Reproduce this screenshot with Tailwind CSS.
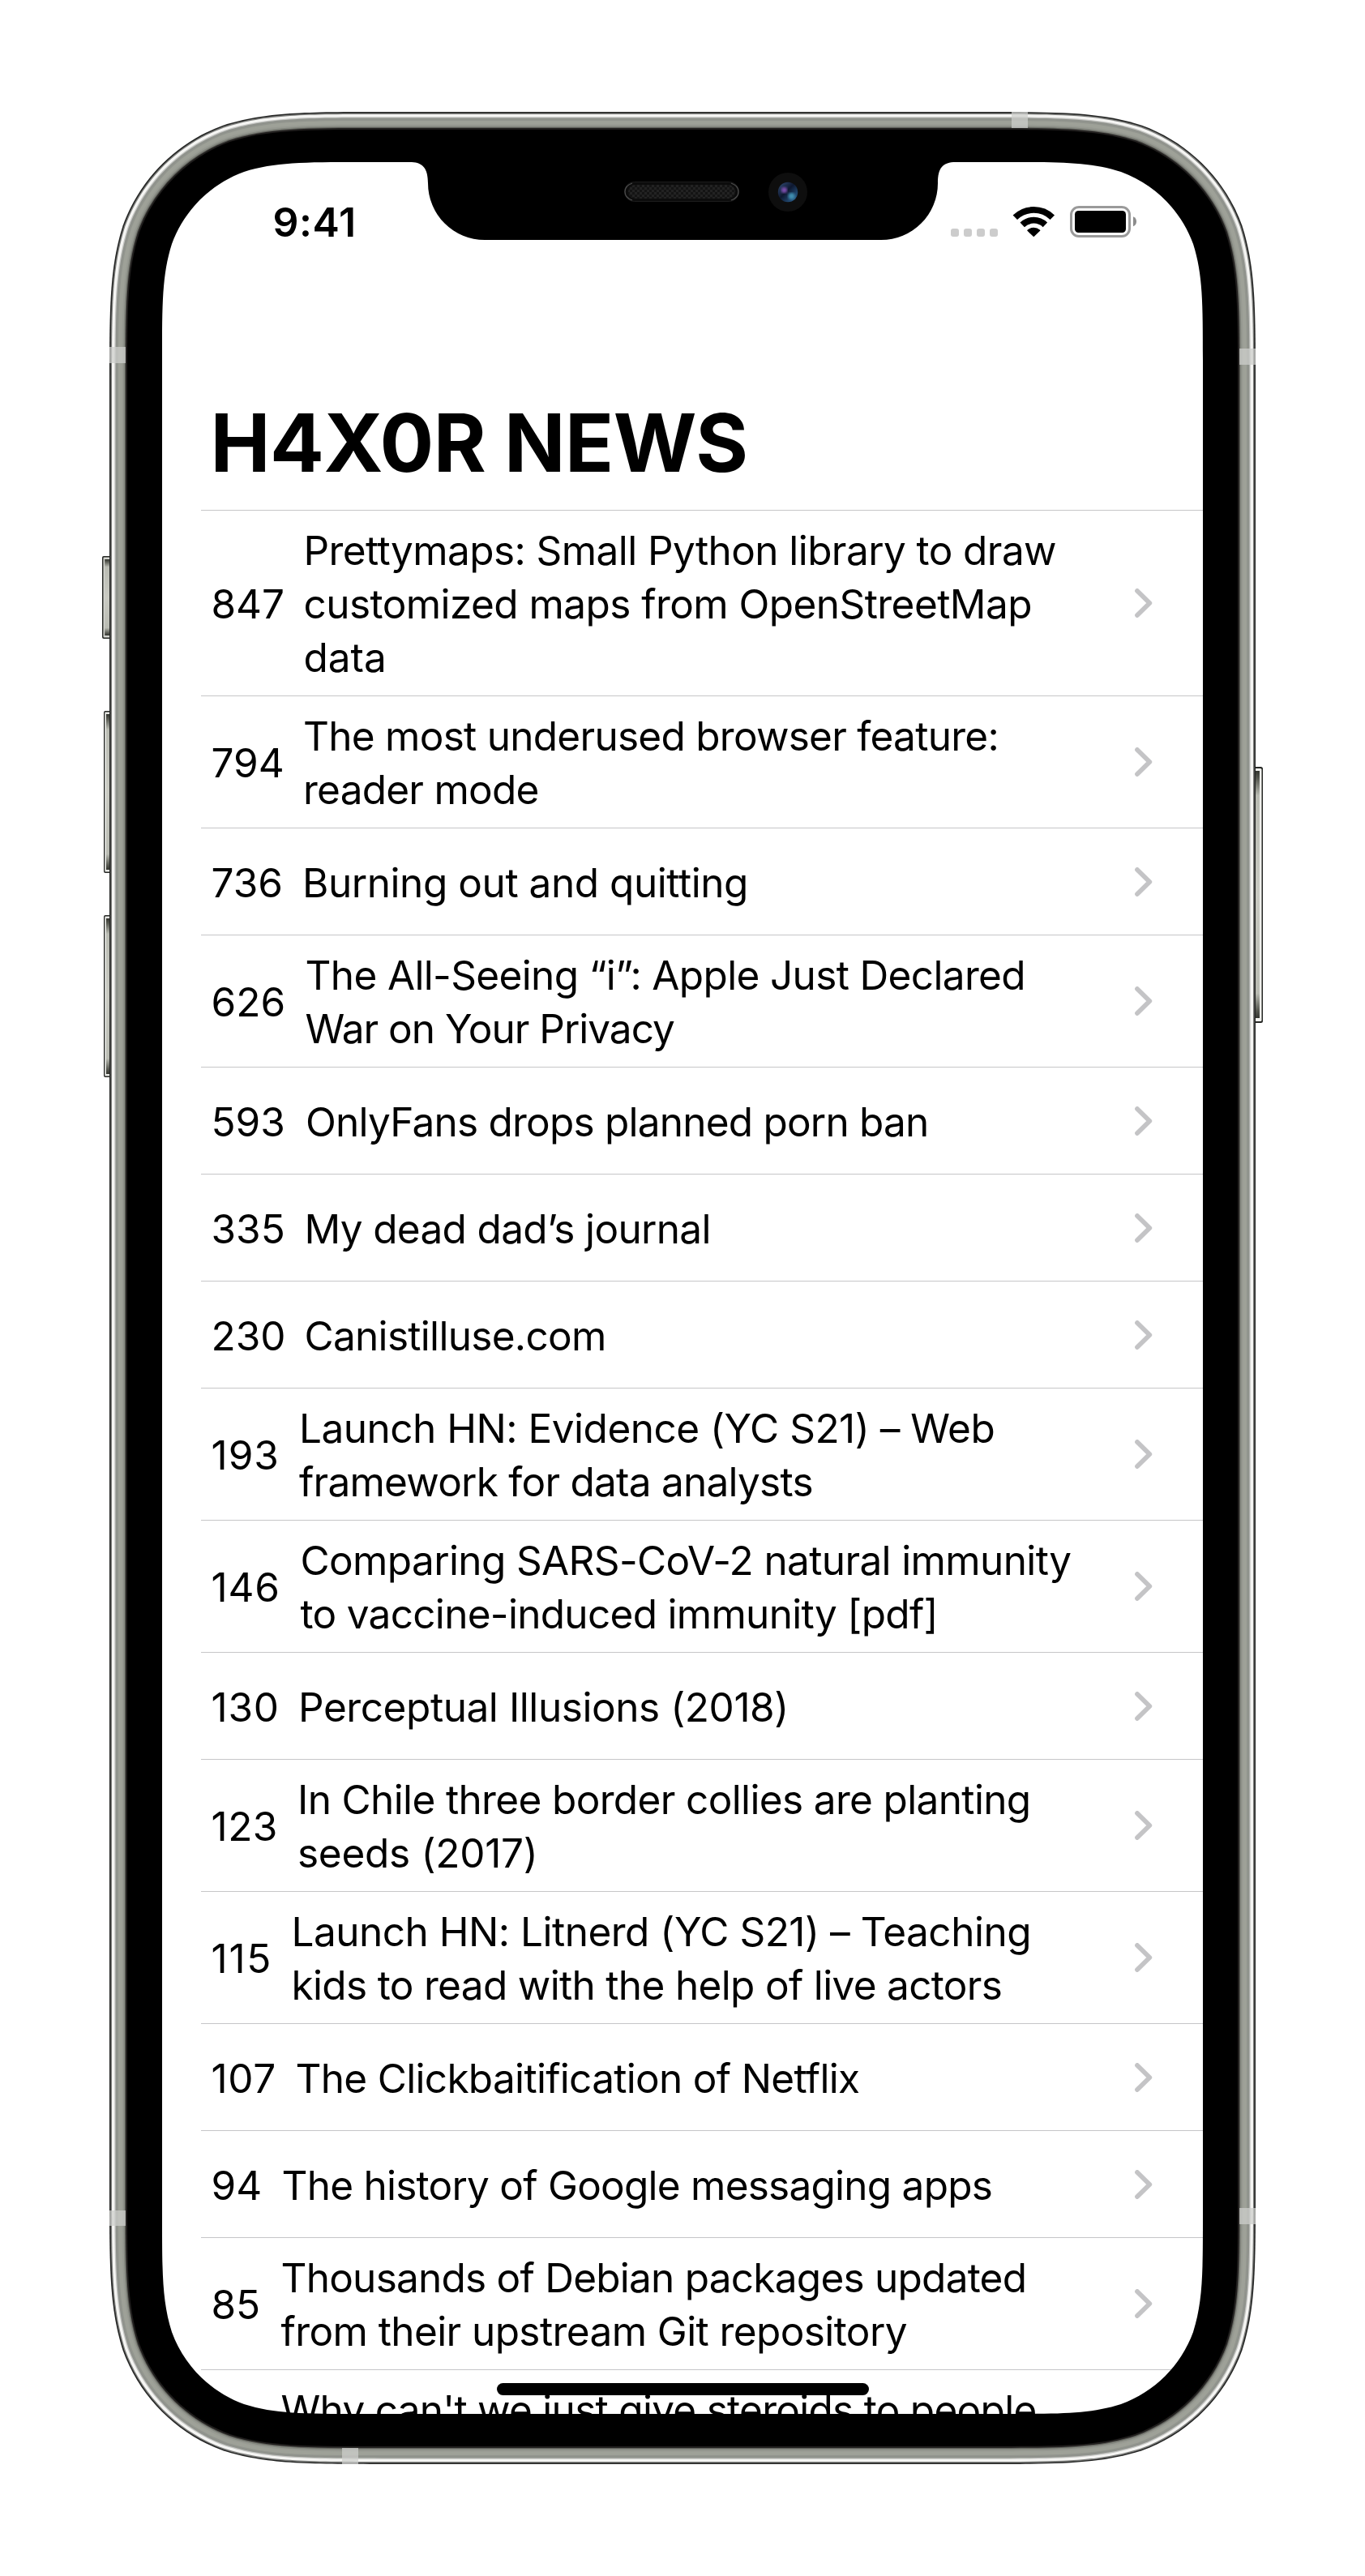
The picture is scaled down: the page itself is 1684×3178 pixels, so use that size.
<!DOCTYPE html>
<html lang="en">
<head>
<meta charset="utf-8">
<title>H4X0R NEWS</title>
<script src="https://cdn.jsdelivr.net/npm/@tailwindcss/browser@4"></script>
</head>
<body class="bg-white">
<svg class="hidden">
  <symbol id="chevron" viewBox="0 0 22 36"><path d="M3 3 18.3 18 3 33" fill="none" stroke="#c4c4c6" stroke-width="5.8" stroke-linecap="round" stroke-linejoin="round"/></symbol>
</svg>
<main class="relative w-[1684px] h-[3178px] p-[200px] overflow-hidden font-['Inter',sans-serif] text-black">

  <!-- metal frame and side buttons -->
  <svg class="absolute inset-0" width="1684" height="3178" viewBox="0 0 1684 3178">
    <defs>
      <linearGradient id="btn" x1="0" y1="0" x2="0" y2="1">
        <stop offset="0" stop-color="#33352f"/><stop offset=".03" stop-color="#55574f"/><stop offset=".1" stop-color="#b9bbb2"/>
        <stop offset=".5" stop-color="#c9cac2"/><stop offset=".9" stop-color="#b9bbb2"/><stop offset=".97" stop-color="#55574f"/><stop offset="1" stop-color="#33352f"/>
      </linearGradient>
      <pattern id="mesh" width="6" height="6" patternUnits="userSpaceOnUse">
        <rect width="6" height="6" fill="#141414"/><rect width="3" height="3" fill="#222"/><rect x="3" y="3" width="3" height="3" fill="#222"/>
      </pattern>
      <linearGradient id="lens" x1="0" y1="0" x2="1" y2="1">
        <stop offset="0" stop-color="#35507a"/><stop offset=".45" stop-color="#0e1830"/><stop offset="1" stop-color="#2f6ca0"/>
      </linearGradient>
      <filter id="soft"><feGaussianBlur stdDeviation="1.6"/></filter>
    </defs>
    <g>
      <rect x="126" y="686" width="14" height="102" rx="2" fill="#262825"/><rect x="127.5" y="687.5" width="12" height="99" rx="1" fill="#d4d5d0"/><rect x="129.2" y="690" width="8" height="94" fill="url(#btn)"/>
      <rect x="128" y="877" width="12" height="200" rx="2" fill="#262825"/><rect x="129.3" y="878.5" width="10" height="197" rx="1" fill="#e6e7e3"/><rect x="131" y="881" width="8" height="192" fill="url(#btn)"/>
      <rect x="128" y="1129" width="12" height="200" rx="2" fill="#262825"/><rect x="129.3" y="1130.5" width="10" height="197" rx="1" fill="#e6e7e3"/><rect x="131" y="1133" width="8" height="192" fill="url(#btn)"/>
      <rect x="1544" y="946" width="14" height="316" rx="2.5" fill="#262825"/><rect x="1545" y="948" width="11.5" height="312" rx="1.5" fill="#f1f1ee"/><rect x="1547" y="951" width="7" height="305" fill="url(#btn)"/>
    </g>
    <g id="rings"></g>
    <g fill="#cdcfcc" fill-opacity=".74">
      <rect x="135" y="428" width="20" height="20"/><rect x="1529" y="430" width="20" height="20"/>
      <rect x="1248" y="138" width="20" height="20"/><rect x="135" y="2727" width="20" height="19"/>
      <rect x="1529" y="2724" width="20" height="20"/><rect x="422" y="3020" width="20" height="20"/>
    </g>
  </svg>

  <!-- screen -->
  <div class="relative w-[1284px] h-[2778px] overflow-hidden rounded-[125px] bg-white">
    <div class="flex h-[147px] items-center justify-between pl-[136.5px] pr-[81px]">
      <span class="text-[50px] leading-[60px] font-semibold tracking-[0.6px]">9:41</span>
      <svg width="230" height="39" viewBox="0 0 230 39">
        <g fill="#ccc"><rect y="28" width="10" height="10" rx="3"/><rect x="16" y="28" width="10" height="10" rx="3"/><rect x="32" y="28" width="10" height="10" rx="3"/><rect x="48" y="28" width="10" height="10" rx="3"/></g>
        <g fill="none" stroke="#000" stroke-width="7.8">
          <path d="M79.3 14.2A33.1 33.1 0 0 1 125.3 14.2"/>
          <path d="M88.2 23.4A20.3 20.3 0 0 1 116.4 23.4"/>
        </g>
        <path d="M95 30.3A11 11 0 0 1 109.6 30.3L102.3 37.3Z" stroke="#000" stroke-width="1.5" stroke-linejoin="round"/>
        <rect x="148.5" y="1.5" width="72" height="36" rx="9.5" fill="none" stroke="#9a9a9a" stroke-width="3"/>
        <rect x="153" y="6" width="63" height="27" rx="4.5"/>
        <path d="M225 13.3Q229 15 229 19.3Q229 23.6 225 25.3Z" fill="#8c8c8c"/>
      </svg>
    </div>
    <header class="flex h-[282px] items-end pb-[22px] pl-[59.5px]">
      <h1 class="text-[99px] leading-[122px] font-bold tracking-[-0.5px] whitespace-pre">H4X0R NEWS</h1>
    </header>
    <ul class="ml-12 text-[49.5px] leading-[66px] whitespace-nowrap">
      <li class="flex h-[229px] items-center border-t border-[#c6c6c8] pl-[12.5px] pr-[62px]">
        <span class="w-[114px] pt-[2px]">847</span>
        <p class="flex-1 pt-[2px]"><span class="block tracking-[-0.58px]">Prettymaps: Small Python library to draw</span><span class="block tracking-[-0.56px]">customized maps from OpenStreetMap</span><span class="block">data</span></p>
        <svg class="h-[36px] w-[22px]"><use href="#chevron"/></svg>
      </li>
      <li class="flex h-[163px] items-center border-t border-[#c6c6c8] pl-[12.5px] pr-[62px]">
        <span class="w-[113.5px] pt-[2px]">794</span>
        <p class="flex-1 pt-[2px]"><span class="block tracking-[-0.73px]">The most underused browser feature:</span><span class="block tracking-[-0.75px]">reader mode</span></p>
        <svg class="h-[36px] w-[22px]"><use href="#chevron"/></svg>
      </li>
      <li class="flex h-[132px] items-center border-t border-[#c6c6c8] pl-[12.5px] pr-[62px]">
        <span class="w-[112.5px] pt-[2px]">736</span>
        <p class="flex-1 pt-[2px] tracking-[-0.44px]">Burning out and quitting</p>
        <svg class="h-[36px] w-[22px]"><use href="#chevron"/></svg>
      </li>
      <li class="flex h-[163px] items-center border-t border-[#c6c6c8] pl-[12.5px] pr-[62px]">
        <span class="w-[116px] pt-[2px]">626</span>
        <p class="flex-1 pt-[2px]"><span class="block tracking-[-0.65px]">The All-Seeing “i”: Apple Just Declared</span><span class="block tracking-[-1px]">War on Your Privacy</span></p>
        <svg class="h-[36px] w-[22px]"><use href="#chevron"/></svg>
      </li>
      <li class="flex h-[132px] items-center border-t border-[#c6c6c8] pl-[12.5px] pr-[62px]">
        <span class="w-[116.5px] pt-[2px]">593</span>
        <p class="flex-1 pt-[2px] tracking-[-0.78px]">OnlyFans drops planned porn ban</p>
        <svg class="h-[36px] w-[22px]"><use href="#chevron"/></svg>
      </li>
      <li class="flex h-[132px] items-center border-t border-[#c6c6c8] pl-[12.5px] pr-[62px]">
        <span class="w-[115px] pt-[2px]">335</span>
        <p class="flex-1 pt-[2px] tracking-[-0.67px]">My dead dad’s journal</p>
        <svg class="h-[36px] w-[22px]"><use href="#chevron"/></svg>
      </li>
      <li class="flex h-[132px] items-center border-t border-[#c6c6c8] pl-[12.5px] pr-[62px]">
        <span class="w-[115px] pt-[2px]">230</span>
        <p class="flex-1 pt-[2px] tracking-[-0.7px]">Canistilluse.com</p>
        <svg class="h-[36px] w-[22px]"><use href="#chevron"/></svg>
      </li>
      <li class="flex h-[163px] items-center border-t border-[#c6c6c8] pl-[12.5px] pr-[62px]">
        <span class="w-[108.5px] pt-[2px] tracking-[1px]">193</span>
        <p class="flex-1 pt-[2px]"><span class="block tracking-[-0.5px]">Launch HN: Evidence (YC S21) – Web</span><span class="block tracking-[-0.75px]">framework for data analysts</span></p>
        <svg class="h-[36px] w-[22px]"><use href="#chevron"/></svg>
      </li>
      <li class="flex h-[163px] items-center border-t border-[#c6c6c8] pl-[12.5px] pr-[62px]">
        <span class="w-[110px] pt-[2px] tracking-[0.8px]">146</span>
        <p class="flex-1 pt-[2px]"><span class="block tracking-[-0.63px]">Comparing SARS-CoV-2 natural immunity</span><span class="block tracking-[-0.7px]">to vaccine-induced immunity [pdf]</span></p>
        <svg class="h-[36px] w-[22px]"><use href="#chevron"/></svg>
      </li>
      <li class="flex h-[132px] items-center border-t border-[#c6c6c8] pl-[12.5px] pr-[62px]">
        <span class="w-[107.5px] pt-[2px] tracking-[0.8px]">130</span>
        <p class="flex-1 pt-[2px] tracking-[-0.43px]">Perceptual Illusions (2018)</p>
        <svg class="h-[36px] w-[22px]"><use href="#chevron"/></svg>
      </li>
      <li class="flex h-[163px] items-center border-t border-[#c6c6c8] pl-[12.5px] pr-[62px]">
        <span class="w-[106.5px] pt-[2px] tracking-[0.5px]">123</span>
        <p class="flex-1 pt-[2px]"><span class="block tracking-[-0.64px]">In Chile three border collies are planting</span><span class="block tracking-[-0.28px]">seeds (2017)</span></p>
        <svg class="h-[36px] w-[22px]"><use href="#chevron"/></svg>
      </li>
      <li class="flex h-[163px] items-center border-t border-[#c6c6c8] pl-[12.5px] pr-[62px]">
        <span class="w-[99px] pt-[2px] tracking-[1.8px]">115</span>
        <p class="flex-1 pt-[2px]"><span class="block tracking-[-0.5px]">Launch HN: Litnerd (YC S21) – Teaching</span><span class="block tracking-[-0.67px]">kids to read with the help of live actors</span></p>
        <svg class="h-[36px] w-[22px]"><use href="#chevron"/></svg>
      </li>
      <li class="flex h-[132px] items-center border-t border-[#c6c6c8] pl-[12.5px] pr-[62px]">
        <span class="w-[104px] pt-[2px] tracking-[0.7px]">107</span>
        <p class="flex-1 pt-[2px] tracking-[-0.69px]">The Clickbaitification of Netflix</p>
        <svg class="h-[36px] w-[22px]"><use href="#chevron"/></svg>
      </li>
      <li class="flex h-[132px] items-center border-t border-[#c6c6c8] pl-[12.5px] pr-[62px]">
        <span class="w-[87px] pt-[2px]">94</span>
        <p class="flex-1 pt-[2px] tracking-[-0.76px]">The history of Google messaging apps</p>
        <svg class="h-[36px] w-[22px]"><use href="#chevron"/></svg>
      </li>
      <li class="flex h-[163px] items-center border-t border-[#c6c6c8] pl-[12.5px] pr-[62px]">
        <span class="w-[86px] pt-[2px]">85</span>
        <p class="flex-1 pt-[2px]"><span class="block tracking-[-0.76px]">Thousands of Debian packages updated</span><span class="block tracking-[-0.59px]">from their upstream Git repository</span></p>
        <svg class="h-[36px] w-[22px]"><use href="#chevron"/></svg>
      </li>
      <li class="flex h-[163px] items-start border-t border-[#c6c6c8] pl-[98.5px] pt-[16px]">
        <p class="tracking-[-0.72px]">Why can't we just give steroids to people</p>
      </li>
    </ul>
    <!-- home indicator -->
    <div class="absolute left-[413px] bottom-[23px] h-[15px] w-[459px] rounded-full bg-black"></div>
  </div>

  <!-- bezel, notch, speaker and camera -->
  <svg class="pointer-events-none absolute inset-0" width="1684" height="3178" viewBox="0 0 1684 3178">
    <path id="bezel" fill="#000" fill-rule="evenodd"/>
    <path d="M506 199V200C521 200 528 207 528 226A70 70 0 0 0 598 296H1087A70 70 0 0 0 1157 226C1157 207 1163 200 1179 200V199Z"/>
    <rect x="770.5" y="224.5" width="141" height="24" rx="12" fill="#0c0c0c" stroke="#1c1c1c"/>
    <path d="M780 226Q771 229 771 236.5T780 247M902 226Q911 229 911 236.5T902 247" fill="none" stroke="#4c4c4c" stroke-width="1.3"/>
    <rect x="775" y="228" width="132" height="17" rx="8.5" fill="url(#mesh)"/>
    <circle cx="972" cy="237" r="24" fill="#0e0e0e"/>
    <circle cx="972" cy="237" r="12.2" fill="url(#lens)"/>
    <circle cx="967.5" cy="234.5" r="3.6" fill="#7d4fae" filter="url(#soft)"/>
    <circle cx="976.5" cy="242" r="4" fill="#3f8fb0" filter="url(#soft)"/>
  </svg>
</main>
<script>
  // Rounded rectangle with continuous-curvature corners.
  function squircle(x, y, w, h, r) {
    const corners = [
      [x + w, y, -1, 0, 0, 1], [x + w, y + h, 0, -1, -1, 0],
      [x, y + h, 1, 0, 0, -1], [x, y, 0, 1, 1, 0]
    ];
    return corners.map(([cx, cy, ax, ay, bx, by], i) => {
      const p = (u, v) => (cx + (ax * u + bx * v) * r).toFixed(2) + ' ' + (cy + (ay * u + by * v) * r).toFixed(2);
      return (i ? 'L' : 'M') + p(1.5287, 0) +
        'C' + p(1.0885, 0) + ' ' + p(.8684, 0) + ' ' + p(.6315, .0749) +
        'C' + p(.3728, .1691) + ' ' + p(.1691, .3728) + ' ' + p(.0749, .6315) +
        'C' + p(0, .8684) + ' ' + p(0, 1.0885) + ' ' + p(0, 1.5287);
    }).join('') + 'Z';
  }
  const phone = inset => squircle(135 + inset, 138 + inset, 1414 - 2 * inset, 2902 - 2 * inset, 222 - inset * .97);
  const rings = [[0, '#232423'], [1.6, '#7c7d7b'], [3, '#f5f5f3'], [6.3, '#c2c3c0'], [7.6, '#8f928c'], [9.5, '#92958e'],
    [11, '#9ea198'], [15.5, '#979a92'], [17.5, '#83867e'], [19, '#5d5e59'], [20, '#211f1e'], [22, '#000']];
  const g = document.getElementById('rings');
  for (const [inset, color] of rings) {
    const p = document.createElementNS('http://www.w3.org/2000/svg', 'path');
    p.setAttribute('d', phone(inset));
    p.setAttribute('fill', color);
    g.appendChild(p);
  }
  document.getElementById('bezel').setAttribute('d', phone(23) + squircle(200, 200, 1284, 2778, 160));
</script>
</body>
</html>
